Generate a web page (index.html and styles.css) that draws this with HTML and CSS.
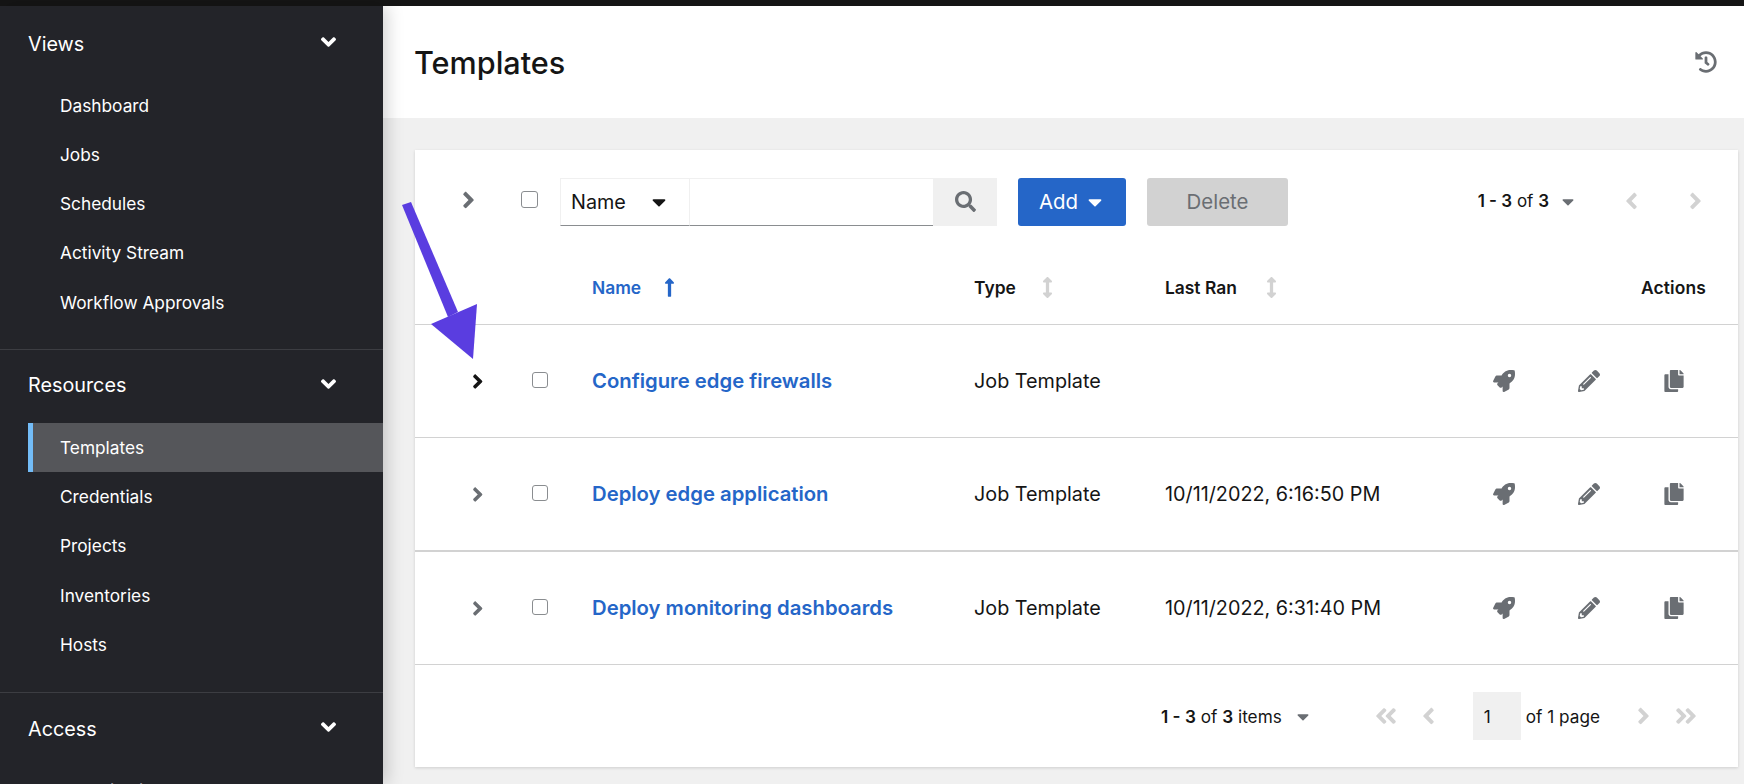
FILE: index.html
```html
<!DOCTYPE html>
<html lang="en">
<head>
    <meta charset="UTF-8">
    <title>Templates</title>
    <link rel="stylesheet" href="styles.css">
</head>
<body>
    <svg class="sprite" xmlns="http://www.w3.org/2000/svg">
        <symbol id="i-right" viewBox="0 0 256 512"><path d="M224.3 273l-136 136c-9.4 9.4-24.6 9.4-33.9 0l-22.6-22.6c-9.4-9.4-9.4-24.6 0-33.9l96.4-96.4-96.4-96.4c-9.4-9.4-9.4-24.6 0-33.9L54.3 103c9.4-9.4 24.6-9.4 33.9 0l136 136c9.5 9.4 9.5 24.6.1 34z"/></symbol>
        <symbol id="i-left" viewBox="0 0 256 512"><path d="M31.7 239l136-136c9.4-9.4 24.6-9.4 33.9 0l22.6 22.6c9.4 9.4 9.4 24.6 0 33.9L127.9 256l96.4 96.4c9.4 9.4 9.4 24.6 0 33.9L201.7 409c-9.4 9.4-24.6 9.4-33.9 0l-136-136c-9.5-9.4-9.5-24.6-.1-34z"/></symbol>
        <symbol id="i-down" viewBox="0 0 320 512"><path d="M143 352.3L7 216.3c-9.4-9.4-9.4-24.6 0-33.9l22.6-22.6c9.4-9.4 24.6-9.4 33.9 0l96.4 96.4 96.4-96.4c9.4-9.4 24.6-9.4 33.9 0l22.6 22.6c9.4 9.4 9.4 24.6 0 33.9l-136 136c-9.2 9.4-24.4 9.4-33.8 0z"/></symbol>
        <symbol id="i-caret" viewBox="0 0 320 512"><path d="M31.3 192h257.3c17.8 0 26.7 21.5 14.1 34.1L174.1 354.8c-7.8 7.8-20.5 7.8-28.3 0L17.2 226.1C4.6 213.5 13.5 192 31.3 192z"/></symbol>
        <symbol id="i-first" viewBox="0 0 448 512"><path d="M223.7 239l136-136c9.4-9.4 24.6-9.4 33.9 0l22.6 22.6c9.4 9.4 9.4 24.6 0 33.9L319.9 256l96.4 96.4c9.4 9.4 9.4 24.6 0 33.9L393.7 409c-9.4 9.4-24.6 9.4-33.9 0l-136-136c-9.5-9.4-9.5-24.6-.1-34z"/><path d="M31.7 239l136-136c9.4-9.4 24.6-9.4 33.9 0l22.6 22.6c9.4 9.4 9.4 24.6 0 33.9L127.9 256l96.4 96.4c9.4 9.4 9.4 24.6 0 33.9L201.7 409c-9.4 9.4-24.6 9.4-33.9 0l-136-136c-9.5-9.4-9.5-24.6-.1-34z"/></symbol>
        <symbol id="i-last" viewBox="0 0 448 512"><path d="M224.3 273l-136 136c-9.4 9.4-24.6 9.4-33.9 0l-22.6-22.6c-9.4-9.4-9.4-24.6 0-33.9l96.4-96.4-96.4-96.4c-9.4-9.4-9.4-24.6 0-33.9L54.3 103c9.4-9.4 24.6-9.4 33.9 0l136 136c9.5 9.4 9.5 24.6.1 34z"/><path d="M416.3 273l-136 136c-9.4 9.4-24.6 9.4-33.9 0l-22.6-22.6c-9.4-9.4-9.4-24.6 0-33.9l96.4-96.4-96.4-96.4c-9.4-9.4-9.4-24.6 0-33.9l22.6-22.7c9.4-9.4 24.6-9.4 33.9 0l136 136c9.5 9.4 9.5 24.6.1 34z"/></symbol>
        <symbol id="i-search" viewBox="0 0 512 512"><path d="M505 442.7L405.3 343c-4.5-4.5-10.6-7-17-7H372c27.6-35.3 44-79.7 44-128C416 93.1 322.9 0 208 0S0 93.1 0 208s93.1 208 208 208c48.3 0 92.7-16.4 128-44v16.3c0 6.4 2.5 12.5 7 17l99.7 99.7c9.4 9.4 24.6 9.4 33.9 0l28.3-28.3c9.4-9.4 9.4-24.6.1-34zM208 336c-70.7 0-128-57.2-128-128 0-70.7 57.2-128 128-128 70.7 0 128 57.2 128 128 0 70.7-57.2 128-128 128z"/></symbol>
        <symbol id="i-up" viewBox="0 0 256 512"><path d="M88 166.059V468c0 6.627 5.373 12 12 12h56c6.627 0 12-5.373 12-12V166.059h46.059c21.382 0 32.09-25.851 16.971-40.971l-86.059-86.059c-9.373-9.373-24.569-9.373-33.941 0l-86.059 86.059c-15.119 15.119-4.411 40.971 16.971 40.971H88z"/></symbol>
        <symbol id="i-sort" viewBox="0 0 256 512"><path d="M214.059 377.941H168V134.059h46.059c21.382 0 32.09-25.851 16.971-40.971L144.971 7.029c-9.373-9.373-24.569-9.373-33.941 0L24.971 93.088c-15.119 15.119-4.411 40.971 16.971 40.971H88v243.882H41.941c-21.382 0-32.09 25.851-16.971 40.971l86.059 86.059c9.373 9.373 24.569 9.373 33.941 0l86.059-86.059c15.12-15.119 4.412-40.971-16.97-40.971z"/></symbol>
        <symbol id="i-rocket" viewBox="0 0 512 512"><path d="M505.12 19.09c-1.19-5.53-6.66-11-12.21-12.18C460.72 0 435.51 0 410.41 0 307.18 0 245.27 55.2 199.05 128H94.84c-16.35.02-35.56 11.88-42.89 26.48L2.52 253.3A28.4 28.4 0 0 0 0 264a24 24 0 0 0 24 24h103.82l-22.48 22.47c-11.36 11.36-13 32.26 0 45.25l50.91 50.9c11.16 11.19 32.16 13.16 45.28 0L224 384.16V488a24 24 0 0 0 24 24 28.56 28.56 0 0 0 10.71-2.52l98.73-49.39c14.63-7.3 26.51-26.5 26.51-42.86V312.8c72.6-46.31 128.03-108.41 128.03-211.1C512.08 76.5 512.08 51.3 505.12 19.09zM384.04 168a40 40 0 1 1 40.01-40 40.02 40.02 0 0 1-40.01 40z"/></symbol>
        <symbol id="i-pencil" viewBox="0 0 512 512"><path d="M497.9 142.1l-46.1 46.1c-4.7 4.7-12.3 4.7-17 0l-111-111c-4.7-4.7-4.7-12.3 0-17l46.1-46.1c18.7-18.7 49.1-18.7 67.9 0l60.1 60.1c18.8 18.7 18.8 49.1 0 67.9zM284.2 99.8L21.6 362.4.4 483.9c-2.9 16.4 11.4 30.6 27.8 27.8l121.5-21.3 262.6-262.6c4.7-4.7 4.7-12.3 0-17l-111-111c-4.8-4.7-12.4-4.7-17.1 0zM124.1 339.9c-5.5-5.5-5.5-14.3 0-19.8l154-154c5.5-5.5 14.3-5.5 19.8 0s5.5 14.3 0 19.8l-154 154c-5.5 5.5-14.3 5.5-19.8 0zM88 424h48v36.3l-64.5 11.3-31.1-31.1L51.7 376H88v48z"/></symbol>
        <symbol id="i-copy" viewBox="0 0 448 512"><path d="M320 448v40c0 13.255-10.745 24-24 24H24c-13.255 0-24-10.745-24-24V120c0-13.255 10.745-24 24-24h72v296c0 30.879 25.121 56 56 56h168zm0-344V0H152c-13.255 0-24 10.745-24 24v368c0 13.255 10.745 24 24 24h272c13.255 0 24-10.745 24-24V128H344c-13.2 0-24-10.8-24-24zm120.971-31.029L375.029 7.029A24 24 0 0 0 358.059 0H352v96h96v-6.059a24 24 0 0 0-7.029-16.97z"/></symbol>
        <symbol id="i-history" viewBox="0 0 512 512"><path d="M504 255.531c.253 136.64-111.18 248.372-247.82 248.468-59.015.042-113.223-20.53-155.822-54.911-11.077-8.94-11.905-25.541-1.839-35.607l11.267-11.267c8.609-8.609 22.353-9.551 31.891-1.984C173.062 425.135 212.781 440 256 440c101.705 0 184-82.311 184-184 0-101.705-82.311-184-184-184-48.814 0-93.149 18.969-126.068 49.932l50.754 50.754c10.08 10.08 2.941 27.314-11.313 27.314H24c-8.837 0-16-7.163-16-16V38.627c0-14.254 17.234-21.393 27.314-11.314l49.372 49.372C129.209 34.136 189.552 8 256 8c136.81 0 247.747 110.78 248 247.531zm-180.912 78.784l9.823-12.63c8.138-10.463 6.253-25.542-4.21-33.679L288 256.349V152c0-13.255-10.745-24-24-24h-16c-13.255 0-24 10.745-24 24v135.651l65.409 50.874c10.463 8.137 25.541 6.253 33.679-4.21z"/></symbol>
    </svg>

    <div class="topbar"></div>

    <div class="layout">
        <nav class="sidebar">
            <section class="nav-section">
                <div class="nav-title nav-title-first">Views <svg class="nav-chevron"><use href="#i-down"/></svg></div>
                <a class="nav-item">Dashboard</a>
                <a class="nav-item">Jobs</a>
                <a class="nav-item">Schedules</a>
                <a class="nav-item">Activity Stream</a>
                <a class="nav-item">Workflow Approvals</a>
            </section>
            <section class="nav-section">
                <div class="nav-title">Resources <svg class="nav-chevron"><use href="#i-down"/></svg></div>
                <a class="nav-item nav-item-active">Templates</a>
                <a class="nav-item">Credentials</a>
                <a class="nav-item">Projects</a>
                <a class="nav-item">Inventories</a>
                <a class="nav-item">Hosts</a>
            </section>
            <section class="nav-section">
                <div class="nav-title">Access <svg class="nav-chevron"><use href="#i-down"/></svg></div>
                <a class="nav-item">Organizations</a>
            </section>
        </nav>

        <main class="main">
            <header class="page-header">
                <h1>Templates</h1>
                <svg class="history-icon"><use href="#i-history"/></svg>
            </header>

            <div class="content">
                <div class="card">
                    <div class="toolbar">
                        <svg class="toolbar-expand"><use href="#i-right"/></svg>
                        <input type="checkbox" class="check toolbar-check">
                        <div class="search">
                            <div class="search-select">Name <svg class="caret"><use href="#i-caret"/></svg></div>
                            <div class="search-input"></div>
                            <div class="search-btn"><svg class="search-icon"><use href="#i-search"/></svg></div>
                        </div>
                        <button class="btn btn-add">Add <svg class="caret"><use href="#i-caret"/></svg></button>
                        <button class="btn btn-delete">Delete</button>
                        <div class="pager-top">
                            <span class="count"><b>1 - 3</b> of <b>3</b></span>
                            <svg class="caret caret-gray"><use href="#i-caret"/></svg>
                            <svg class="page-arrow page-prev"><use href="#i-left"/></svg>
                            <svg class="page-arrow page-next"><use href="#i-right"/></svg>
                        </div>
                    </div>

                    <div class="row row-head">
                        <div></div>
                        <div></div>
                        <div class="th th-sorted">Name <svg class="sort-icon sort-up"><use href="#i-up"/></svg></div>
                        <div class="th th-type">Type <svg class="sort-icon"><use href="#i-sort"/></svg></div>
                        <div class="th th-ran">Last Ran <svg class="sort-icon"><use href="#i-sort"/></svg></div>
                        <div class="th th-actions">Actions</div>
                    </div>

                    <div class="row">
                        <div class="cell-expand"><svg class="row-expand row-expand-dark"><use href="#i-right"/></svg></div>
                        <div class="cell-check"><input type="checkbox" class="check row-check"></div>
                        <a class="job-link">Configure edge firewalls</a>
                        <div>Job Template</div>
                        <div></div>
                        <div class="actions">
                            <svg class="action-icon"><use href="#i-rocket"/></svg>
                            <svg class="action-icon"><use href="#i-pencil"/></svg>
                            <svg class="action-icon"><use href="#i-copy"/></svg>
                        </div>
                    </div>

                    <div class="row row-thick">
                        <div class="cell-expand"><svg class="row-expand"><use href="#i-right"/></svg></div>
                        <div class="cell-check"><input type="checkbox" class="check row-check"></div>
                        <a class="job-link">Deploy edge application</a>
                        <div>Job Template</div>
                        <div>10/11/2022, 6:16:50 PM</div>
                        <div class="actions">
                            <svg class="action-icon"><use href="#i-rocket"/></svg>
                            <svg class="action-icon"><use href="#i-pencil"/></svg>
                            <svg class="action-icon"><use href="#i-copy"/></svg>
                        </div>
                    </div>

                    <div class="row">
                        <div class="cell-expand"><svg class="row-expand"><use href="#i-right"/></svg></div>
                        <div class="cell-check"><input type="checkbox" class="check row-check"></div>
                        <a class="job-link">Deploy monitoring dashboards</a>
                        <div>Job Template</div>
                        <div>10/11/2022, 6:31:40 PM</div>
                        <div class="actions">
                            <svg class="action-icon"><use href="#i-rocket"/></svg>
                            <svg class="action-icon"><use href="#i-pencil"/></svg>
                            <svg class="action-icon"><use href="#i-copy"/></svg>
                        </div>
                    </div>

                    <div class="footer">
                        <span class="count"><b>1 - 3</b> of <b>3</b> items</span>
                        <svg class="caret caret-gray"><use href="#i-caret"/></svg>
                        <svg class="foot-arrow foot-first"><use href="#i-first"/></svg>
                        <svg class="foot-arrow foot-prev"><use href="#i-left"/></svg>
                        <div class="page-box">1</div>
                        <span class="page-of">of 1 page</span>
                        <svg class="foot-arrow foot-next"><use href="#i-right"/></svg>
                        <svg class="foot-arrow foot-last"><use href="#i-last"/></svg>
                    </div>
                </div>
            </div>
        </main>
    </div>

    <!-- annotation arrow drawn over the page -->
    <svg class="callout" viewBox="0 0 80 160">
        <polygon points="1,5 10,2 57,112 47,117"/>
        <polygon points="76,104 30,124 72,159"/>
    </svg>
</body>
</html>
```

FILE: styles.css
```css
* {
    box-sizing: border-box;
}

html, body {
    margin: 0;
    height: 100%;
    overflow: hidden;
}

body {
    display: flex;
    flex-direction: column;
    background: #f0f0f0;
    color: #151515;
    font-family: Inter, Lato, sans-serif;
    font-size: 19.8px;
}

.sprite {
    display: none;
}

svg {
    fill: currentColor;
    flex: none;
}

.topbar {
    height: 6px;
    flex: none;
    background: #151515;
}

.layout {
    display: flex;
    flex: 1;
    min-height: 0;
}

/* Sidebar */
.sidebar {
    width: 383px;
    flex: none;
    background: #232429;
    color: #fff;
    overflow: hidden;
    box-shadow: 4px 0 16px rgba(0, 0, 0, 0.18);
    z-index: 1;
}

.nav-section {
    padding-bottom: 22px;
    border-bottom: 1px solid #3c3d42;
}

.nav-section:last-child {
    border-bottom: none;
    padding-bottom: 0;
}

.nav-section + .nav-section {
    padding-bottom: 23px;
}

.nav-title {
    height: 73px;
    padding: 0 47px 2px 28px;
    display: flex;
    align-items: center;
    justify-content: space-between;
    font-size: 19.8px;
}

.nav-title-first {
    height: 74.5px;
    padding-top: 1px;
    padding-bottom: 0;
}

.nav-chevron {
    width: 15px;
    height: 24px;
    margin-top: -3px;
}

.nav-item {
    display: flex;
    align-items: center;
    height: 49.25px;
    margin-left: 28px;
    padding-left: 32px;
    font-size: 17.3px;
}

.nav-item-active {
    background: #55565a;
    border-left: 5px solid #73bcf7;
    padding-left: 27px;
}

/* Main */
.main {
    flex: 1;
    min-width: 0;
    display: flex;
    flex-direction: column;
}

.page-header {
    height: 112px;
    flex: none;
    background: #fff;
    display: flex;
    align-items: center;
    justify-content: space-between;
    padding: 0 27px 0 31px;
}

.page-header h1 {
    margin: 1px 0 0;
    font-size: 30.6px;
    font-weight: 500;
}

.history-icon {
    width: 22px;
    height: 22px;
    color: #6a6e73;
}

.content {
    padding: 32px 6px 0 32px;
}

.card {
    background: #fff;
    box-shadow: 0 1px 3px rgba(0, 0, 0, 0.14);
}

/* Toolbar */
.toolbar {
    height: 102px;
    padding: 28px 0 0 48px;
    display: flex;
    align-items: flex-start;
}

.toolbar-expand {
    width: 13px;
    height: 26px;
    margin: 9px 0 0 -1px;
    color: #6a6e73;
}

.check {
    appearance: none;
    width: 17px;
    height: 17px;
    margin: 0;
    display: block;
    background: #fff;
    border: 1px solid #8a8d90;
    border-radius: 3px;
}

.toolbar-check {
    margin: 13px 0 0 46px;
}

.row-check {
    width: 16px;
    height: 16px;
    margin-top: -3px;
}

.search {
    display: flex;
    margin-left: 22px;
    height: 48px;
}

.search-select {
    width: 130px;
    display: flex;
    align-items: center;
    gap: 26px;
    padding-left: 10px;
    border: 1px solid #f0f0f0;
    border-bottom-color: #8a8d90;
}

.search-input {
    width: 243px;
    border-top: 1px solid #f0f0f0;
    border-bottom: 1px solid #8a8d90;
}

.search-btn {
    width: 64px;
    background: #f0f0f0;
    display: flex;
    align-items: center;
    justify-content: center;
}

.search-icon {
    width: 21px;
    height: 21px;
    margin-top: -1px;
    color: #6a6e73;
}

.caret {
    width: 14px;
    height: 22px;
    color: #151515;
}

.caret-gray {
    width: 12px;
    height: 19px;
    color: #6a6e73;
}

.btn {
    height: 48px;
    border: none;
    border-radius: 3px;
    padding: 0 0 1px;
    font-family: inherit;
    font-size: 20.4px;
    display: flex;
    align-items: center;
    justify-content: center;
}

.btn-add {
    width: 108px;
    margin-left: 21px;
    gap: 10px;
    padding-right: 3px;
    background: #2566c8;
    color: #fff;
}

.btn-add .caret {
    color: #fff;
}

.btn-delete {
    width: 141px;
    margin-left: 21px;
    background: #d2d2d2;
    color: #6a6e73;
}

.pager-top {
    display: flex;
    align-items: center;
    height: 46px;
    margin-left: auto;
    padding-right: 36px;
    font-size: 17px;
}

.count b {
    font-weight: 600;
}

.pager-top .caret {
    margin-left: 13px;
}

.page-arrow {
    width: 13px;
    height: 26px;
    color: #d2d2d2;
}

.page-prev {
    margin-left: 51px;
}

.page-next {
    margin-left: 51px;
}

/* Table */
.row {
    display: grid;
    grid-template-columns: 95px 82px 382px 191px 296px 255px;
    align-items: center;
    height: 113px;
    border-bottom: 1px solid #d2d2d2;
}

.row-thick {
    height: 114px;
    border-bottom-width: 2px;
}

.row-head {
    height: 73px;
    padding-bottom: 2px;
}

.th {
    display: flex;
    align-items: center;
    font-size: 17.4px;
    font-weight: 600;
}

.th-sorted {
    color: #2566c8;
    gap: 23px;
}

.th-type {
    gap: 26px;
}

.th-ran {
    gap: 29px;
}

.th-actions {
    justify-content: flex-end;
    padding-right: 10px;
    letter-spacing: 0.15px;
}

.sort-icon {
    width: 11px;
    height: 21px;
    color: #d2d2d2;
}

.sort-up {
    color: #2566c8;
}

.cell-expand {
    padding-left: 57px;
    display: flex;
}

.row-expand {
    width: 11.5px;
    height: 23px;
    color: #6a6e73;
}

.row-expand-dark {
    color: #151515;
}

.cell-check {
    padding-left: 22px;
}

.job-link {
    color: #2566c8;
    font-size: 20.3px;
    font-weight: 600;
    margin-bottom: 2px;
}

.actions {
    display: grid;
    grid-template-columns: repeat(3, 85px);
    justify-items: center;
}

.action-icon {
    width: 22px;
    height: 22px;
    color: #6a6e73;
}

/* Bottom pagination */
.footer {
    height: 102px;
    display: flex;
    align-items: center;
    padding-left: 746px;
    font-size: 17.2px;
}

.footer .caret {
    margin-left: 15px;
}

.foot-arrow {
    width: 13px;
    height: 26px;
    color: #d2d2d2;
}

.foot-first {
    width: 22px;
    margin-left: 66px;
}

.foot-prev {
    margin-left: 25px;
}

.page-box {
    width: 48px;
    height: 48px;
    margin-left: 38px;
    padding-left: 11px;
    background: #f0f0f0;
    display: flex;
    align-items: center;
}

.page-of {
    margin-left: 5px;
}

.foot-next {
    margin-left: 37px;
}

.foot-last {
    width: 22px;
    margin-left: 25px;
}

/* Annotation arrow */
.callout {
    position: absolute;
    left: 401px;
    top: 200px;
    width: 80px;
    height: 160px;
    fill: #5a3de0;
    z-index: 2;
}
```
